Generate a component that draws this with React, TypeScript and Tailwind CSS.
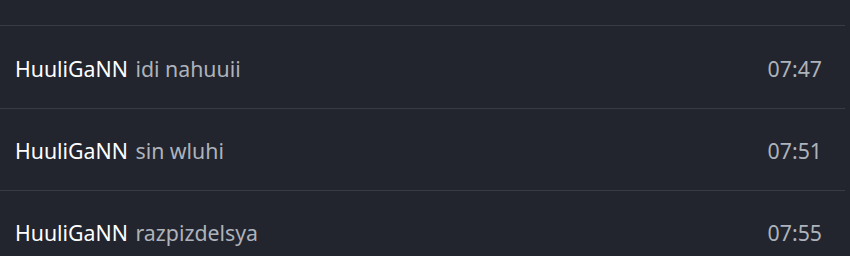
const messages = [
  { user: "HuuliGaNN", text: "idi nahuuii", time: "07:47" },
  { user: "HuuliGaNN", text: "sin wluhi", time: "07:51" },
  { user: "HuuliGaNN", text: "razpizdelsya", time: "07:55" },
];

const Row = (props: { user: string; text: string; time: string; h: string }) => {
  return (
    <div className={`flex items-center justify-between border-t border-[#383b43] pl-[15px] pr-[23px] pt-[3px] ${props.h}`}>
      <div className="text-[21.3px] leading-none">
        <span className="text-white">{props.user}</span>{" "}
        <span className="ml-[2px] text-[#aeb3bb]">{props.text}</span>
      </div>
      <span className="text-[21.3px] leading-none text-[#aeb3bb]">{props.time}</span>
    </div>
  );
};

export default function App() {
  return (
    <div
      className="w-[850px] h-[256px] overflow-hidden bg-[#22252d] pr-[5px]"
      style={{ fontFamily: '"Segoe UI", "Noto Sans", "Open Sans", sans-serif' }}
    >
      <div className="h-[25px]" />
      {messages.map((m, i) => (
        <Row key={i} {...m} h={i === 0 ? "h-[83px]" : "h-[82px]"} />
      ))}
    </div>
  );
}
